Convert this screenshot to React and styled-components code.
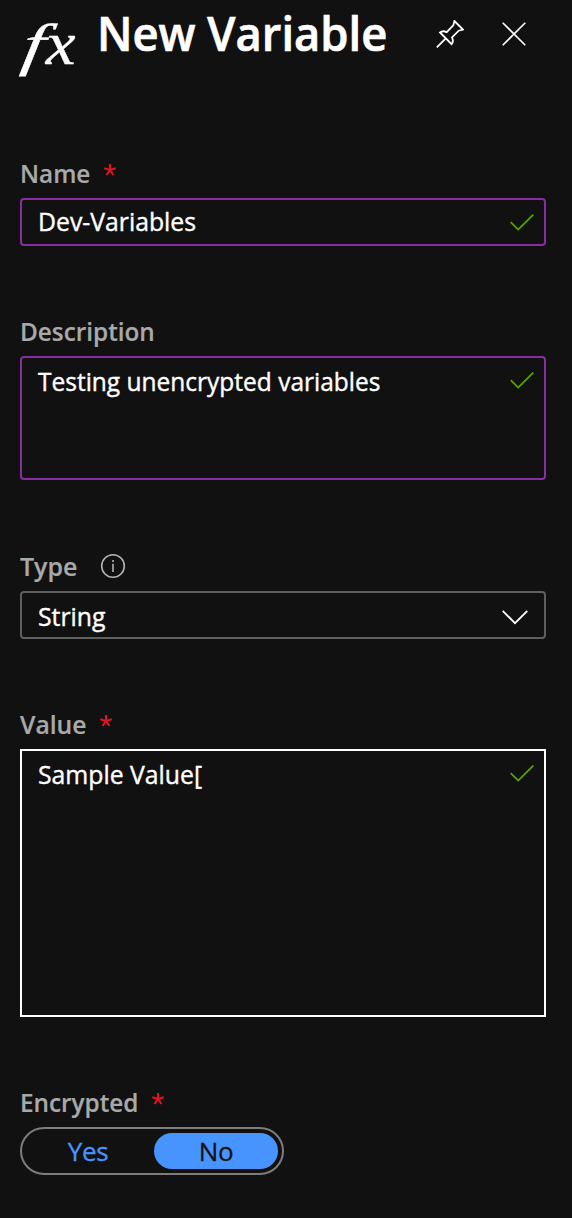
import React from "react";
import styled, { createGlobalStyle } from "styled-components";

const GlobalStyle = createGlobalStyle`
  body { margin: 0; background: #111111; }
  * { box-sizing: border-box; }
`;

const Panel = styled.main`
  width: 572px;
  height: 1218px;
  padding: 0 26px 0 20px;
  overflow: hidden;
  background: #111111;
  color: #ffffff;
  font-family: "Open Sans", "Noto Sans", sans-serif;
  font-size: 26px;
`;

const Header = styled.header`
  display: flex;
  align-items: flex-start;
  height: 162px;
`;

const FunctionMark = styled.div`
  flex: none;
  width: 77px;
  padding: 0 0 0 9px;
  font: italic 62px/86px "Liberation Serif", serif;
  white-space: nowrap;
`;

const MarkLetter = styled.span`
  display: inline-block;
  margin-right: ${(p) => p.$gap || 0}px;
  font-size: ${(p) => p.$size}px;
  transform: scaleX(${(p) => p.$stretch}) skewX(${(p) => p.$skew || 0}deg);
  transform-origin: right center;
  -webkit-text-stroke: 0.4px #ffffff;
`;

const Title = styled.h1`
  flex: none;
  width: 329px;
  margin: 0;
  font-size: 47.5px;
  line-height: 66px;
  font-weight: 600;
  white-space: nowrap;
  transform: scaleX(0.954);
  transform-origin: left center;
  -webkit-text-stroke: 0.7px currentColor;
`;

const IconButton = styled.button`
  flex: none;
  display: flex;
  align-items: center;
  justify-content: center;
  width: 48px;
  height: 68px;
  margin-right: 16px;
  padding: 0;
  border: 0;
  background: none;
  color: #ffffff;
`;

const Field = styled.section`
  margin-bottom: ${(p) => p.$gap || 74}px;
`;

const LabelRow = styled.div`
  display: flex;
  height: 36px;
  line-height: 22px;
  color: #a9a9a9;
`;

const Label = styled.label`
  font-weight: 600;
  white-space: nowrap;
  transform: scaleX(${(p) => p.$fit || 0.935});
  transform-origin: left center;
  -webkit-text-stroke: 0.2px currentColor;
`;

const Required = styled.svg`
  margin: 2px 0 0 ${(p) => p.$left}px;
`;

const InfoIcon = styled.svg`
  margin: -2px 0 0 ${(p) => p.$left}px;
`;

const Box = styled.div`
  display: flex;
  justify-content: space-between;
  height: ${(p) => p.$height || 48}px;
  padding: ${(p) => p.$top || 4}px 10px 0 16px;
  border: 2px solid ${(p) => p.$color};
  border-radius: ${(p) => (p.$square ? 0 : 4)}px;
  line-height: 34px;
`;

const Value = styled.span`
  white-space: nowrap;
  transform: scaleX(${(p) => p.$fit || 0.953});
  transform-origin: left center;
  -webkit-text-stroke: 0.4px currentColor;
`;

const BoxIcon = styled.svg`
  margin-top: ${(p) => p.$top}px;
  margin-right: ${(p) => p.$right || 0}px;
`;

const Toggle = styled.div`
  display: flex;
  width: 264px;
  height: 48px;
  padding: 4px;
  border: 2px solid #7d7d7d;
  border-radius: 24px;
`;

const Option = styled.button`
  width: ${(p) => (p.$active ? 124 : 128)}px;
  height: 36px;
  padding: 0 ${(p) => (p.$active ? 0 : 4)}px 0 0;
  border: 0;
  border-radius: 18px;
  background: ${(p) => (p.$active ? "#4894fe" : "transparent")};
  color: ${(p) => (p.$active ? "#111111" : "#4894fe")};
  font: inherit;
  line-height: 36px;
  letter-spacing: -0.4px;
  -webkit-text-stroke: 0.3px currentColor;
`;

const Star = ({ left }) => (
  <Required $left={left} width="12" height="12" viewBox="0 0 12 12" fill="none" stroke="#e81123" strokeWidth="2">
    <path d="M6 0v6M0.3 4.2L6 6L11.7 4.2M2.5 11L6 6L9.5 11" />
  </Required>
);

const Check = ({ top }) => (
  <BoxIcon $top={top} width="24" height="17" viewBox="0 0 24 17" fill="none" stroke="#57a300" strokeWidth="1.8">
    <path d="M.7 8.2L8.2 15.6L23.3.7" />
  </BoxIcon>
);

export default function App() {
  return (
    <>
      <GlobalStyle />
      <Panel>
        <Header>
          <FunctionMark>
            <MarkLetter $gap={3} $size={58} $stretch={1.35} $skew={-7}>f</MarkLetter>
            <MarkLetter $size={62} $stretch={1.08}>x</MarkLetter>
          </FunctionMark>
          <Title>New Variable</Title>
          <IconButton aria-label="Pin">
            <svg width="28" height="28" viewBox="0 0 28 28" fill="none" stroke="currentColor" strokeWidth="1.8">
              <path d="M18.4 1L27 9.6L22.7 10.7L16 17.4C17.2 20 17 22.6 15.6 24.1L4 12.5C5.6 11.1 8 10.8 10.7 12.1L17.3 5.4ZM9.8 18.3L.8 27.3" />
            </svg>
          </IconButton>
          <IconButton aria-label="Close">
            <svg width="24" height="24" viewBox="0 0 24 24" fill="none" stroke="currentColor" strokeWidth="1.6">
              <path d="M.7.7L23.3 23.3M23.3.7L.7 23.3" />
            </svg>
          </IconButton>
        </Header>

        <Field>
          <LabelRow><Label>Name</Label><Star left={9} /></LabelRow>
          <Box $color="#8a2da5">
            <Value>Dev-Variables</Value>
            <Check top={10} />
          </Box>
        </Field>

        <Field $gap={75}>
          <LabelRow><Label>Description</Label></LabelRow>
          <Box $color="#8a2da5" $height={124} $top={6}>
            <Value $fit={0.942}>Testing unencrypted variables</Value>
            <Check top={8} />
          </Box>
        </Field>

        <Field>
          <LabelRow>
            <Label $fit={0.96}>Type</Label>
            <InfoIcon $left={20} width="26" height="26" viewBox="0 0 26 26" fill="none" stroke="#b3b3b3" strokeWidth="1.6">
              <circle cx="13" cy="13" r="11.3" />
              <path d="M13 10.8V19M13 7v2" />
            </InfoIcon>
          </LabelRow>
          <Box $color="#5f5f5f" $top={6}>
            <Value>String</Value>
            <BoxIcon $top={11} $right={6} width="26" height="15" viewBox="0 0 26 15" fill="none" stroke="#ffffff" strokeWidth="1.8">
              <path d="M.7.8L13 13.2L25.3.8" />
            </BoxIcon>
          </Box>
        </Field>

        <Field>
          <LabelRow><Label $fit={0.95}>Value</Label><Star left={10} /></LabelRow>
          <Box $color="#ffffff" $height={268} $top={6} $square>
            <Value>Sample Value[</Value>
            <Check top={8} />
          </Box>
        </Field>

        <Field>
          <LabelRow><Label>Encrypted</Label><Star left={5} /></LabelRow>
          <Toggle>
            <Option>Yes</Option>
            <Option $active>No</Option>
          </Toggle>
        </Field>
      </Panel>
    </>
  );
}
